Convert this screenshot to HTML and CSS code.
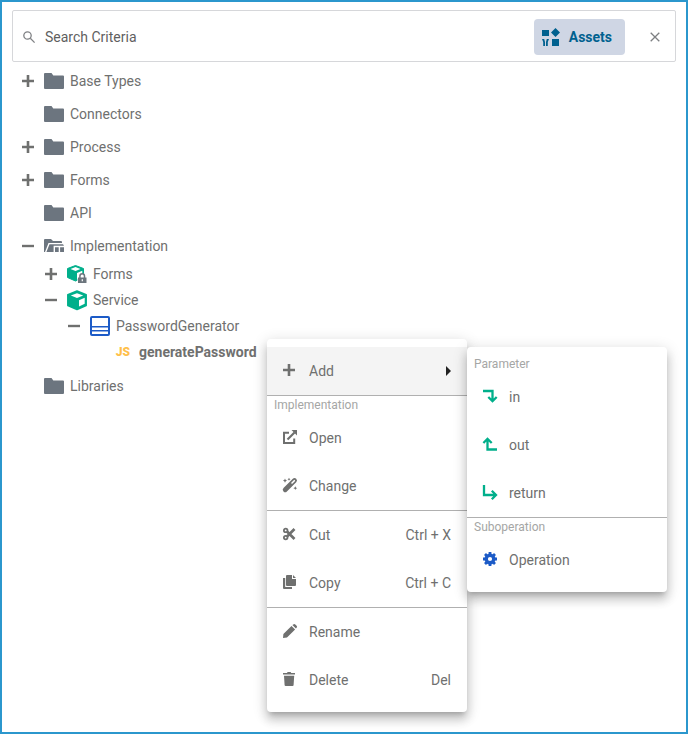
FILE: index.html
```html
<!DOCTYPE html>
<html lang="en">
<head>
<meta charset="utf-8">
<meta name="viewport" content="width=device-width, initial-scale=1">
<title>Assets</title>
<link rel="stylesheet" href="styles.css">
</head>
<body>
<svg class="defs" aria-hidden="true">
  <symbol id="plus" viewBox="0 0 12 12"><path d="M6 0v12M0 6h12" fill="none" stroke="currentColor" stroke-width="2.6"/></symbol>
  <symbol id="minus" viewBox="0 0 12 12"><path d="M0 6h12" fill="none" stroke="currentColor" stroke-width="2.4"/></symbol>
  <symbol id="folder" viewBox="0 0 20 20"><path d="M1 2h6.500l1.800 2.400H19a1 1 0 0 1 1 1V17a1 1 0 0 1-1 1H1a1 1 0 0 1-1-1V3a1 1 0 0 1 1-1z" fill="currentColor"/></symbol>
</svg>
<main class="panel">
  <form class="search">
    <svg class="search-icon" viewBox="0 0 12 12" aria-hidden="true"><circle cx="4.500" cy="4.500" r="3.700"/><path d="M7.300 7.300L11.600 11.600"/></svg>
    <input class="search-input" type="text" placeholder="Search Criteria" aria-label="Search Criteria">
    <button class="assets" type="button">
      <svg viewBox="0 0 18 18" aria-hidden="true"><path d="M0 2h7v6H0zM13.500 0L18 4.500 13.500 9 9 4.500zM10 11h7v7h-7zM0 11h2.200L3 14v4H1.200v-4zM7 11H4.800L4 14v4h1.800v-4z"/></svg>
      Assets
    </button>
    <button class="close" type="button" aria-label="Close"><svg viewBox="0 0 10 10" aria-hidden="true"><path d="M.7.7l8.600 8.600M9.300.7L.7 9.300"/></svg></button>
  </form>

  <ul class="tree">
    <li><div class="row"><button class="toggle" aria-label="Expand Base Types"><svg><use href="#plus"/></svg></button><svg class="icon"><use href="#folder"/></svg><span>Base Types</span></div></li>
    <li><div class="row"><span class="toggle"></span><svg class="icon"><use href="#folder"/></svg><span>Connectors</span></div></li>
    <li><div class="row"><button class="toggle" aria-label="Expand Process"><svg><use href="#plus"/></svg></button><svg class="icon"><use href="#folder"/></svg><span>Process</span></div></li>
    <li><div class="row"><button class="toggle" aria-label="Expand Forms"><svg><use href="#plus"/></svg></button><svg class="icon"><use href="#folder"/></svg><span>Forms</span></div></li>
    <li><div class="row"><span class="toggle"></span><svg class="icon"><use href="#folder"/></svg><span>API</span></div></li>
    <li>
      <div class="row"><button class="toggle" aria-label="Collapse Implementation"><svg><use href="#minus"/></svg></button>
        <svg class="icon" viewBox="0 0 20 20"><path d="M0 4a1 1 0 0 1 1-1h6l2 2h8a1 1 0 0 1 1 1v1H4.500L1 16H0z" fill="currentColor"/><path d="M5.500 8.200H19l1 1.500V16H2.400z" fill="currentColor"/><path d="M10.300 17v-6.500H20M15.400 11v6" fill="none" stroke="#fff" stroke-width="1.400"/></svg>
        <span>Implementation</span></div>
      <ul class="branch">
        <li><div class="row"><button class="toggle" aria-label="Expand Forms"><svg><use href="#plus"/></svg></button>
          <svg class="icon" viewBox="0 0 20 20"><path d="M8.500 1.500l8 3V13.500l-8 3.500-8-3.500v-9z" fill="#00af8b" stroke="#00af8b" stroke-linejoin="round"/><path d="M3.500 5l5-1.900L13.500 5l-5 2.100zM10 9l5.300-2.300V12L10 15z" fill="#fff"/><path d="M10.300 11.500L12 10h6l2 1.500V20h-9.700z" fill="#fff"/><path d="M11 13.500h8.500V19H11z" fill="#6c757d"/><path d="M12.900 14v-2a2.300 2.300 0 0 1 4.600 0v2" fill="none" stroke="#6c757d" stroke-width="1.500"/><path d="M14.700 15.200h1.200v2h-1.200z" fill="#fff"/></svg>
          <span>Forms</span></div></li>
        <li><div class="row"><button class="toggle" aria-label="Collapse Service"><svg><use href="#minus"/></svg></button>
          <svg class="icon" viewBox="0 0 20 20"><path d="M10 1l9.200 3.700v10.800L10 19.500.8 15.500V4.700z" fill="#00af8b" stroke="#00af8b" stroke-width="1.500" stroke-linejoin="round"/><path d="M3.800 5.500L10 3.200l6.200 2.300L10 8zM12 10.200l5.700-2.400v6L12 16.400z" fill="#fff"/></svg>
          <span>Service</span></div>
          <ul class="branch">
            <li><div class="row"><button class="toggle" aria-label="Collapse PasswordGenerator"><svg><use href="#minus"/></svg></button>
              <svg class="icon" viewBox="0 0 20 20"><rect x="1" y="1" width="18" height="18" rx="1" fill="none" stroke="#1c5bc7" stroke-width="2"/><path d="M1 10.800h18M1 14.800h18" stroke="#1c5bc7" stroke-width="1.600"/></svg>
              <span>PasswordGenerator</span></div>
              <ul class="branch">
                <li><div class="row selected"><span class="toggle"></span><span class="icon js">JS</span><span>generatePassword</span></div></li>
              </ul>
            </li>
          </ul>
        </li>
      </ul>
    </li>
    <li><div class="row"><span class="toggle"></span><svg class="icon"><use href="#folder"/></svg><span>Libraries</span></div></li>
  </ul>
</main>

<div class="menu context" role="menu">
  <button class="item active" role="menuitem"><svg viewBox="0 0 14 14"><path d="M6 1v12M0 7h12" fill="none" stroke="currentColor" stroke-width="2.600"/></svg>Add<span class="arrow"></span></button>
  <hr>
  <div class="heading">Implementation</div>
  <button class="item" role="menuitem"><svg viewBox="0 0 14 14"><path d="M6 2.800H1V13h10.200V8.500" fill="none" stroke="currentColor" stroke-width="2"/><path d="M4.500 9.500L11.500 2.500" stroke="currentColor" stroke-width="2.200"/><path d="M8.500 0H14v5.500z" fill="currentColor"/></svg>Open</button>
  <button class="item" role="menuitem"><svg viewBox="0 0 14 14"><path d="M2.200 11.800L11.500 2.500" stroke="currentColor" stroke-width="4.800" stroke-linecap="round"/><path d="M9 5l2.300-2.300" stroke="#fff" stroke-width="1.600" stroke-linecap="round"/><path d="M2 .5l.7 1.400 1.400.7-1.400.7L2 4.700l-.7-1.400L-.1 2.600l1.400-.7zM6 -.2l.5 1 1 .5-1 .5-.5 1-.5-1-1-.5 1-.5zM12.300 8.300l.6 1.300 1.300.6-1.300.6-.6 1.300-.6-1.300-1.300-.6 1.300-.6z" fill="currentColor"/></svg>Change</button>
  <hr>
  <button class="item" role="menuitem"><svg viewBox="0 0 14 14"><g fill="none" stroke="currentColor" stroke-width="1.800"><circle cx="2.700" cy="3.400" r="1.800"/><circle cx="2.700" cy="10.600" r="1.800"/></g><path d="M4 4.500L11.500 12M4 9.500L11.500 2" stroke="currentColor" stroke-width="2.700"/></svg>Cut<kbd>Ctrl + X</kbd></button>
  <button class="item" role="menuitem"><svg viewBox="0 0 14 14"><path d="M0 3h2.200v9H9v2H1a1 1 0 0 1-1-1z" fill="currentColor"/><path d="M4 0h5v4h4v6a1 1 0 0 1-1 1H4a1 1 0 0 1-1-1V1a1 1 0 0 1 1-1zM10 0l3 3h-3z" fill="currentColor"/></svg>Copy<kbd>Ctrl + C</kbd></button>
  <hr>
  <button class="item" role="menuitem"><svg viewBox="0 0 14 14"><path d="M8.500 1.900l3.600 3.600L4 13.600 0 14l.4-4zM9.400 1.100L10.300.4a1.400 1.400 0 0 1 2 0l1.300 1.300a1.400 1.400 0 0 1 0 2l-.7.900z" fill="currentColor"/></svg>Rename</button>
  <button class="item" role="menuitem"><svg viewBox="0 0 14 14"><path d="M0 1h4l.6-1h3l.6 1H12v1.600H0zM1 3.700h10.200L10.600 13a1 1 0 0 1-1 1h-7a1 1 0 0 1-1-1z" fill="currentColor"/></svg>Delete<kbd>Del</kbd></button>
</div>

<div class="menu submenu" role="menu">
  <div class="heading">Parameter</div>
  <button class="item" role="menuitem"><svg class="green" viewBox="0 0 14 14"><path d="M0 2h9.500v10M5.300 8l4.200 4.200L13.700 8"/></svg>in</button>
  <button class="item" role="menuitem"><svg class="green" viewBox="0 0 14 14"><path d="M14 12.500H4.500V2M.4 6l4.100-4.200L8.700 6"/></svg>out</button>
  <button class="item" role="menuitem"><svg class="green" viewBox="0 0 14 14"><path d="M1 0v10h12M8.800 5.700L13 10l-4.200 4.200"/></svg>return</button>
  <hr>
  <div class="heading">Suboperation</div>
  <button class="item" role="menuitem"><svg viewBox="0 0 14 14"><g fill="none" stroke="#1c5bc7"><circle cx="7" cy="7" r="3.800" stroke-width="3.400"/><path d="M7 0v2M7 12v2M0 7h2M12 7h2M2 2l1.500 1.500M10.500 10.500L12 12M2 12l1.500-1.500M10.500 3.500L12 2" stroke-width="2.800"/></g></svg>Operation</button>
</div>
</body>
</html>
```
FILE: styles.css
```css
* { box-sizing: border-box; }

body {
  position: relative;
  min-height: 100vh;
  margin: 0;
  border: 2px solid #2b97cd;
  background: #fff;
  color: #6f706f;
  font: 14px/20px Roboto, sans-serif;
}

button {
  margin: 0;
  padding: 0;
  border: 0;
  background: none;
  color: inherit;
  font: inherit;
  cursor: pointer;
}

svg { display: block; flex: none; overflow: visible; }
.defs { position: absolute; width: 0; height: 0; }

.panel { padding: 8px 10px; }

.search {
  display: flex;
  align-items: center;
  height: 52px;
  padding: 2px 15px 0 10px;
  border: 1px solid #d6d7da;
  border-radius: 2px;
}

.search-icon {
  width: 12px;
  height: 12px;
  fill: none;
  stroke: #808285;
  stroke-width: 1.3;
}

.search-input {
  flex: 1;
  min-width: 0;
  margin-left: 10px;
  padding: 0;
  border: 0;
  outline: 0;
  color: #5f5f5f;
  font: inherit;
}

.search-input::placeholder { color: #5f5f5f; opacity: 1; }

.assets {
  display: flex;
  align-items: center;
  gap: 9px;
  height: 36px;
  margin-right: 25px;
  padding: 0 13px 0 8px;
  border-radius: 4px;
  background: #cfd6e4;
  color: #00618f;
  font-weight: 700;
}

.assets svg { width: 18px; height: 18px; fill: currentColor; }
.close svg { width: 10px; height: 10px; stroke: #7d7f82; stroke-width: 1.3; }

.tree, .branch { margin: 0; padding: 0; list-style: none; }
.tree { padding: 2px 0 0 10px; }

.row { display: flex; align-items: center; height: 33px; }

.branch { padding: 0 0 1px 23px; }
.branch .row { height: 24px; margin-bottom: 2px; }

.toggle { flex: none; width: 12px; margin-right: 10px; color: #6f706f; }
.toggle svg { width: 12px; height: 12px; }
.icon { width: 20px; height: 20px; margin-right: 6px; color: #6c757f; }
.selected { font-weight: 700; }
.icon.js { color: #ffc04a; font-size: 12px; font-weight: 900; text-align: center; }

.menu {
  position: absolute;
  width: 200px;
  padding: 8px 0;
  border-radius: 4px;
  background: #fff;
  box-shadow: 0 5px 5px -3px rgba(0, 0, 0, .2), 0 8px 10px 1px rgba(0, 0, 0, .14), 0 3px 14px 2px rgba(0, 0, 0, .12);
}

.context { top: 337px; left: 265px; }
.submenu { top: 345px; left: 465px; }

.menu hr { height: 1px; margin: 0; border: 0; background: #b0b0b0; }
.heading { padding-left: 7px; color: #a5a6a5; font-size: 12px; line-height: 18px; }

.item {
  display: flex;
  align-items: center;
  width: 100%;
  height: 48px;
  padding: 0 16px;
  text-align: left;
}

.item svg { width: 14px; height: 14px; margin: 0 12px 2px 0; }
.active { background: #f4f4f4; }
.item kbd { margin-left: auto; font: inherit; }

.arrow {
  margin-left: auto;
  border: 5px solid transparent;
  border-right-width: 0;
  border-left-color: #222;
}

.item .green { fill: none; stroke: #00af8b; stroke-width: 2.3; }
```
